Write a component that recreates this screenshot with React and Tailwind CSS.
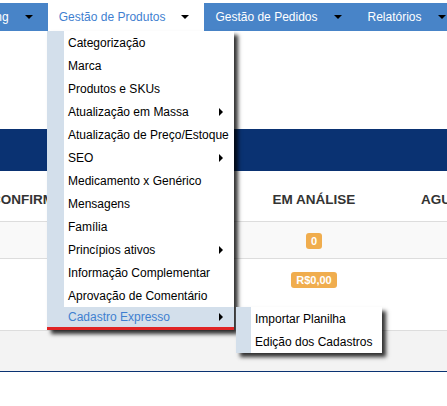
const font = { fontFamily: '"Liberation Sans", Arial, sans-serif' };

const menuItems = [
  { label: 'Categorização' },
  { label: 'Marca' },
  { label: 'Produtos e SKUs' },
  { label: 'Atualização em Massa', sub: true },
  { label: 'Atualização de Preço/Estoque' },
  { label: 'SEO', sub: true },
  { label: 'Medicamento x Genérico' },
  { label: 'Mensagens' },
  { label: 'Família' },
  { label: 'Princípios ativos', sub: true },
  { label: 'Informação Complementar' },
  { label: 'Aprovação de Comentário' },
];

function DownCaret() {
  return <span className="ml-[16px] inline-block h-0 w-0 shrink-0 border-x-[4px] border-t-[4px] border-x-transparent border-t-black" />;
}

function RightCaret() {
  return <span className="ml-auto mr-[11px] inline-block h-0 w-0 shrink-0 border-y-[4px] border-l-[4px] border-y-transparent border-l-black" />;
}

function NavTab({ label, active }) {
  return (
    <div
      className={`flex h-full shrink-0 items-center whitespace-nowrap pl-[11px] pr-[15px] text-[12px] ${
        active ? 'bg-white text-[#3f7fd0]' : 'text-white'
      }`}
    >
      <span>{label}</span>
      <DownCaret />
    </div>
  );
}

function Badge({ children }) {
  return (
    <span className="inline-flex h-[16px] items-center rounded-[3px] bg-[#f0ad4e] px-[5px] text-[11px] font-bold text-white">
      {children}
    </span>
  );
}

export default function App() {
  return (
    <div className="relative h-[406px] w-[447px] overflow-hidden bg-white" style={font}>
      {/* top navigation */}
      <div className="pt-[3px]">
        <div className="flex h-[28px] overflow-hidden bg-[#4884c8]">
          <div className="ml-[-55px] flex h-full shrink-0">
            <NavTab label="Marketing" />
            <NavTab label="Gestão de Produtos" active />
            <NavTab label="Gestão de Pedidos" />
            <NavTab label="Relatórios" />
          </div>
        </div>
      </div>

      <div className="h-[98px]" />
      <div className="h-[42px] bg-[#0a3272]" />

      {/* table */}
      <div className="flex h-[51px] items-end overflow-hidden whitespace-nowrap border-b border-[#dddddd] pb-[11px] text-[13.5px] font-bold text-[#333333]">
        <div className="ml-[-9px] w-[237px] shrink-0">CONFIRMADOS</div>
        <div className="w-[172px] shrink-0 text-center">EM ANÁLISE</div>
        <div className="shrink-0 pl-[21px]">AGUARDANDO</div>
      </div>
      <div className="flex h-[37px] items-center border-b border-[#dddddd] bg-[#f9f9f9]">
        <div className="w-[228px] shrink-0" />
        <div className="w-[172px] shrink-0 text-center">
          <Badge>0</Badge>
        </div>
      </div>
      <div className="flex h-[71px] items-start pt-[8px]">
        <div className="w-[228px] shrink-0" />
        <div className="w-[172px] shrink-0 text-center">
          <Badge>R$0,00</Badge>
        </div>
      </div>
      <div className="h-[42px] border-y border-t-[#dddddd] border-b-[#0a3272] bg-[#f3f3f3]" />

      {/* dropdown menu */}
      <div className="absolute left-[47px] top-[31px] w-[187px] whitespace-nowrap bg-white text-[12px] text-black shadow-[4px_4px_4px_rgba(0,0,0,0.8)]">
        {menuItems.map((item) => (
          <div key={item.label} className="flex h-[23px] items-center">
            <div className="h-full w-[17px] shrink-0 bg-[#d3dfeb]" />
            <span className="pl-[4px]">{item.label}</span>
            {item.sub && <RightCaret />}
          </div>
        ))}
        <div className="flex h-[23px] items-center border-b-[3px] border-[#e02424] bg-[#d3dfeb] text-[#3f7fd0]">
          <span className="pl-[21px]">Cadastro Expresso</span>
          <RightCaret />
        </div>
      </div>

      {/* sub menu */}
      <div className="absolute left-[236px] top-[307px] w-[146px] whitespace-nowrap bg-white text-[12px] text-black shadow-[4px_4px_4px_rgba(0,0,0,0.8)]">
        {['Importar Planilha', 'Edição dos Cadastros'].map((label) => (
          <div key={label} className="flex h-[23px] items-center">
            <div className="h-full w-[15px] shrink-0 bg-[#d3dfeb]" />
            <span className="pl-[4px]">{label}</span>
          </div>
        ))}
      </div>
    </div>
  );
}
